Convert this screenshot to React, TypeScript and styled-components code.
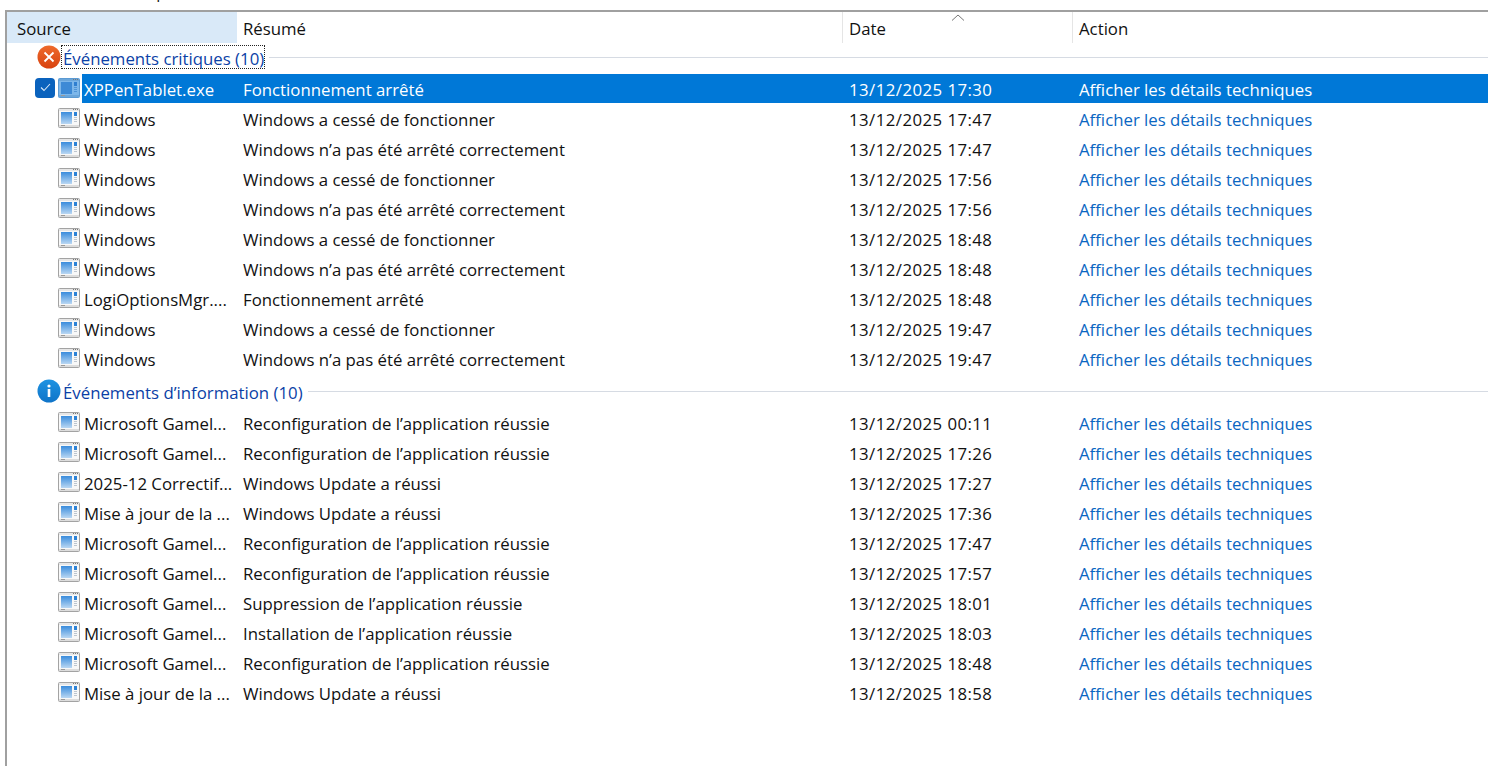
import * as React from "react";
import styled, { createGlobalStyle } from "styled-components";

const GlobalStyle = createGlobalStyle`
    html, body {
        margin: 0;
        padding: 0;
        height: 100%;
        overflow: hidden;
        background: white;
    }
`

const Page = styled.div`
    width: 1488px;
    height: 766px;
    overflow: hidden;
    background: white;
    font-family: "Open Sans", "Noto Sans", sans-serif;
    font-size: 16.8px;
    color: #111;
    display: flex;
    flex-direction: column;
`

// The title above the list is scrolled almost out of view, only its descenders show
const TitleClip = styled.div`
    height: 10px;
    overflow: hidden;
    padding-left: 17px;
`

const TitleText = styled.div`
    margin-top: -20px;
    line-height: 24px;
    white-space: nowrap;
    font-size: 16px;
    letter-spacing: 0.1px;
`

const Panel = styled.div`
    flex: 1;
    margin-left: 5px;
    border-left: 2px solid #a0a0a0;
    border-top: 2px solid #a0a0a0;
`

const columns = "230px 606px 230px 1fr"

const HeaderRow = styled.div`
    display: grid;
    grid-template-columns: ${columns};
    height: 31px;
`

const HeaderCell = styled.div<{ $active?: boolean }>`
    position: relative;
    display: flex;
    align-items: center;
    padding-top: 2px;
    padding-left: ${p => p.$active ? "10px" : "6px"};
    background: ${p => p.$active ? "#d9e9f8" : "white"};
    border-right: 1px solid ${p => p.$active ? "#d9e9f8" : "#e5e5e5"};

    &:last-child {
        border-right: none;
    }
`

const SortCaret = styled.svg`
    position: absolute;
    top: 2px;
    left: 50%;
    margin-left: -7px;
`

const GroupRow = styled.div<{ $top: number }>`
    display: flex;
    align-items: center;
    box-sizing: border-box;
    height: 30px;
    margin-top: ${p => p.$top}px;
    padding: 0 0 2px 30px;
`

const GroupLabel = styled.span<{ $focused?: boolean }>`
    display: block;
    height: 24px;
    line-height: 28px;
    color: #0b3fa6;
    padding: 0 1px 0 2px;
    white-space: nowrap;
    outline: ${p => p.$focused ? "1px dotted #222" : "none"};
    outline-offset: -1px;
`

const GroupLine = styled.div`
    flex: 1;
    height: 1px;
    margin-left: 4px;
    background: #d6dbe3;
`

const Row = styled.div`
    display: grid;
    grid-template-columns: ${columns};
    height: 30px;
    align-items: center;
`

const SourceCell = styled.div`
    position: relative;
    display: flex;
    align-items: center;
    padding-left: 51px;
    min-width: 0;
`

const SourceText = styled.span<{ $selected?: boolean }>`
    display: block;
    flex: 1;
    height: 29px;
    line-height: 32px;
    margin-left: 2px;
    padding-left: 2px;
    white-space: nowrap;
    overflow: hidden;
    color: ${p => p.$selected ? "white" : "inherit"};
    background: ${p => p.$selected ? "#0078d7" : "transparent"};
`

const Cell = styled.div<{ $selected?: boolean, $link?: boolean, $wide?: boolean }>`
    height: 29px;
    line-height: 32px;
    padding-left: 6px;
    white-space: nowrap;
    overflow: hidden;
    letter-spacing: ${p => p.$wide ? "0.45px" : "0"};
    background: ${p => p.$selected ? "#0078d7" : "transparent"};
    color: ${p => p.$selected ? "white" : p.$link ? "#0a66c2" : "inherit"};
`

const CheckBox = styled.div`
    position: absolute;
    left: 28px;
    top: 4px;
    width: 20px;
    height: 20px;
    border-radius: 4px;
    background: #0a62bd;
    display: flex;
    align-items: center;
    justify-content: center;
`

const GroupIcon = styled.div`
    display: flex;
    flex: none;
`

/** The small application window drawn in front of every source. */
const WindowIcon = ({ selected }: { selected?: boolean }) => (
    <svg width="22" height="20" viewBox="0 0 22 20">
        <defs>
            <linearGradient id="pane" x1="0" y1="0" x2="0" y2="1">
                <stop offset="0" stopColor="#3a8cdc" />
                <stop offset="1" stopColor="#b9d7f3" />
            </linearGradient>
        </defs>
        <rect x="0.5" y="0.5" width="21" height="19" rx="1" fill={selected ? "#7db7ea" : "#f8f8f8"} stroke={selected ? "#5b9ad3" : "#a3a3a3"} />
        <rect x="1" y="1" width="20" height="2" fill={selected ? "#6ba6da" : "#e6e6e6"} />
        <rect x="15" y="1" width="1" height="1" fill="#777" />
        <rect x="17" y="1" width="1" height="1" fill="#777" />
        <rect x="19" y="1" width="1" height="1" fill="#777" />
        <rect x="3" y="4" width="11" height="12" fill={selected ? "#3d8ad6" : "url(#pane)"} />
        <rect x="16" y="4" width="3" height="4" fill={selected ? "#2f7fd0" : "#2d82d6"} />
        <rect x="16" y="9" width="3" height="1" fill={selected ? "#4f94d6" : "#bcc6d0"} />
        <rect x="16" y="11" width="3" height="1" fill={selected ? "#4f94d6" : "#bcc6d0"} />
        <rect x="16" y="13" width="3" height="1" fill={selected ? "#4f94d6" : "#bcc6d0"} />
        <rect x="1" y="17" width="20" height="2" fill={selected ? "#6ba6da" : "#dcdcdc"} />
        <rect x="3" y="17" width="4" height="1" fill="#999" />
    </svg>
)

const ErrorIcon = () => (
    <svg width="24" height="24" viewBox="0 0 24 24">
        <defs>
            <linearGradient id="err" x1="0" y1="0" x2="0" y2="1">
                <stop offset="0" stopColor="#ee6a2c" />
                <stop offset="1" stopColor="#d8420f" />
            </linearGradient>
        </defs>
        <circle cx="12" cy="12" r="11.5" fill="url(#err)" />
        <path d="M7.5 7.5 L16.5 16.5 M16.5 7.5 L7.5 16.5" stroke="white" strokeWidth="1.8" />
    </svg>
)

const InfoIcon = () => (
    <svg width="24" height="24" viewBox="0 0 24 24">
        <defs>
            <linearGradient id="inf" x1="0" y1="0" x2="0" y2="1">
                <stop offset="0" stopColor="#1e93e2" />
                <stop offset="1" stopColor="#0f74c8" />
            </linearGradient>
        </defs>
        <circle cx="12" cy="12" r="11.5" fill="url(#inf)" />
        <rect x="10.7" y="10" width="2.6" height="8" fill="white" />
        <circle cx="12" cy="7" r="1.6" fill="white" />
    </svg>
)

type Event = { source: string, summary: string, date: string }

const WIN_STOP = "Windows a cessé de fonctionner"
const WIN_BAD = "Windows n’a pas été arrêté correctement"
const RECONF = "Reconfiguration de l’application réussie"
const UPDATE = "Windows Update a réussi"
const GAME = "Microsoft Gamel..."

const criticalEvents: Event[] = [
    { source: "XPPenTablet.exe", summary: "Fonctionnement arrêté", date: "13/12/2025 17:30" },
    { source: "Windows", summary: WIN_STOP, date: "13/12/2025 17:47" },
    { source: "Windows", summary: WIN_BAD, date: "13/12/2025 17:47" },
    { source: "Windows", summary: WIN_STOP, date: "13/12/2025 17:56" },
    { source: "Windows", summary: WIN_BAD, date: "13/12/2025 17:56" },
    { source: "Windows", summary: WIN_STOP, date: "13/12/2025 18:48" },
    { source: "Windows", summary: WIN_BAD, date: "13/12/2025 18:48" },
    { source: "LogiOptionsMgr....", summary: "Fonctionnement arrêté", date: "13/12/2025 18:48" },
    { source: "Windows", summary: WIN_STOP, date: "13/12/2025 19:47" },
    { source: "Windows", summary: WIN_BAD, date: "13/12/2025 19:47" },
]

const infoEvents: Event[] = [
    { source: GAME, summary: RECONF, date: "13/12/2025 00:11" },
    { source: GAME, summary: RECONF, date: "13/12/2025 17:26" },
    { source: "2025-12 Correctif...", summary: UPDATE, date: "13/12/2025 17:27" },
    { source: "Mise à jour de la ...", summary: UPDATE, date: "13/12/2025 17:36" },
    { source: GAME, summary: RECONF, date: "13/12/2025 17:47" },
    { source: GAME, summary: RECONF, date: "13/12/2025 17:57" },
    { source: GAME, summary: "Suppression de l’application réussie", date: "13/12/2025 18:01" },
    { source: GAME, summary: "Installation de l’application réussie", date: "13/12/2025 18:03" },
    { source: GAME, summary: RECONF, date: "13/12/2025 18:48" },
    { source: "Mise à jour de la ...", summary: UPDATE, date: "13/12/2025 18:58" },
]

const EventRow = ({ event, selected }: { event: Event, selected?: boolean }) => (
    <Row>
        <SourceCell>
            {selected &&
                <CheckBox>
                    <svg width="11" height="9" viewBox="0 0 11 9">
                        <path d="M1 4.5 L4 7.5 L10 1" fill="none" stroke="#d8e8f8" strokeWidth="1.1" />
                    </svg>
                </CheckBox>}
            <WindowIcon selected={selected} />
            <SourceText $selected={selected}>{event.source}</SourceText>
        </SourceCell>
        <Cell $selected={selected}>{event.summary}</Cell>
        <Cell $selected={selected} $wide>{event.date}</Cell>
        <Cell $selected={selected} $link>Afficher les détails techniques</Cell>
    </Row>
)

export default function App() {
    return (
        <Page>
            <GlobalStyle />
            <TitleClip>
                <TitleText>Détails de fiabilité pour : 13/12/2025</TitleText>
            </TitleClip>
            <Panel>
                <HeaderRow>
                    <HeaderCell $active>Source</HeaderCell>
                    <HeaderCell>Résumé</HeaderCell>
                    <HeaderCell>
                        Date
                        <SortCaret width="14" height="7" viewBox="0 0 14 7">
                            <path d="M1 6.5 L7 1 L13 6.5" fill="none" stroke="#777" strokeWidth="1" />
                        </SortCaret>
                    </HeaderCell>
                    <HeaderCell>Action</HeaderCell>
                </HeaderRow>
                <GroupRow $top={0}>
                    <GroupIcon><ErrorIcon /></GroupIcon>
                    <GroupLabel $focused>Événements critiques (10)</GroupLabel>
                    <GroupLine />
                </GroupRow>
                {criticalEvents.map((e, i) => <EventRow key={i} event={e} selected={i == 0} />)}
                <GroupRow $top={4}>
                    <GroupIcon><InfoIcon /></GroupIcon>
                    <GroupLabel>Événements d’information (10)</GroupLabel>
                    <GroupLine />
                </GroupRow>
                {infoEvents.map((e, i) => <EventRow key={i} event={e} />)}
            </Panel>
        </Page>
    )
}
